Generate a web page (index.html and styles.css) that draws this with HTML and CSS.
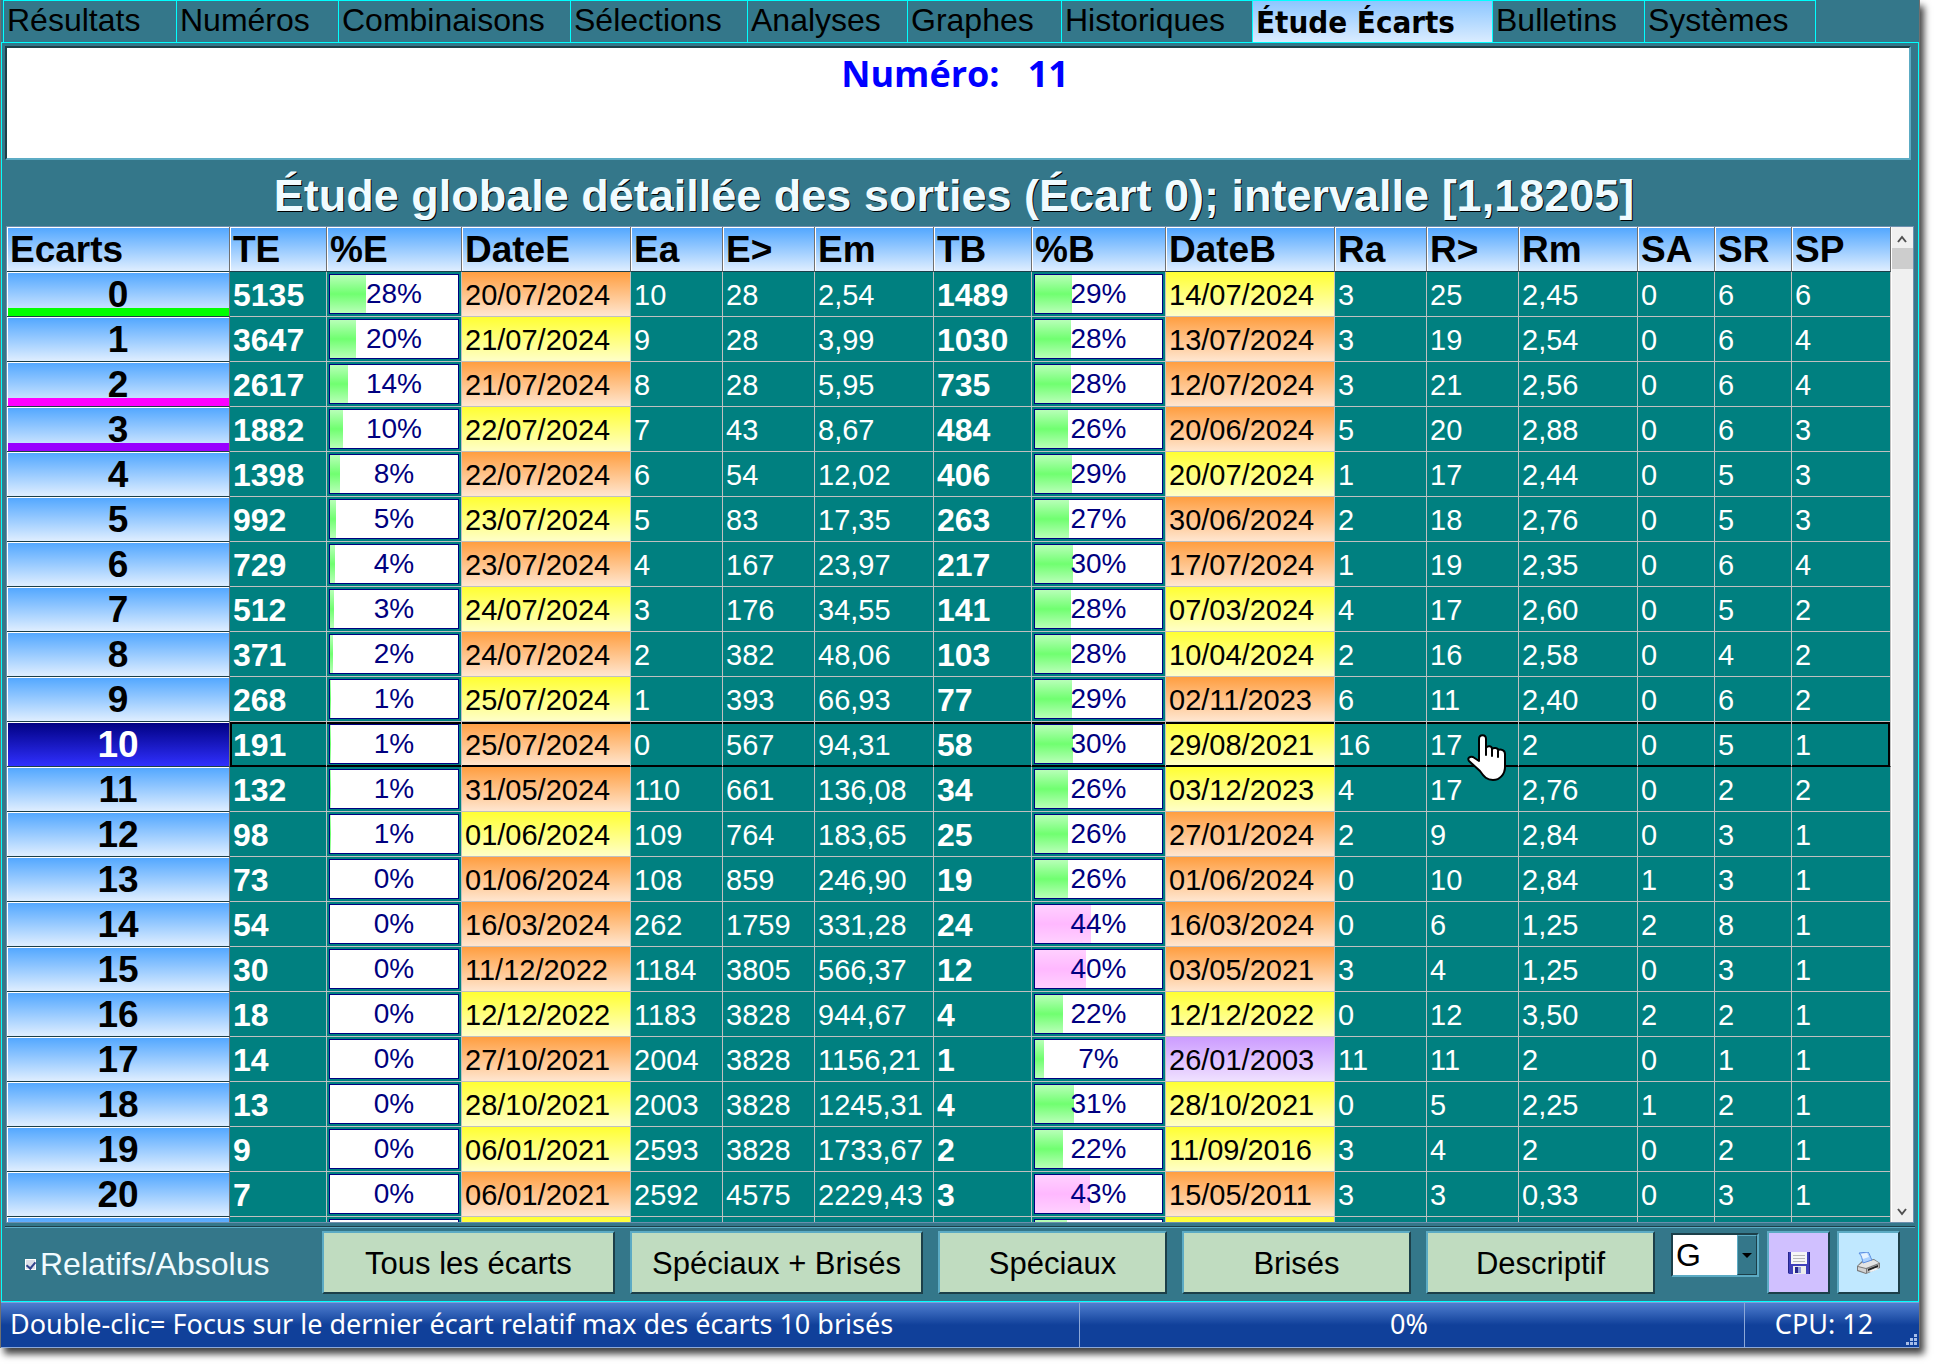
FILE: index.html
```html
<!DOCTYPE html>
<html lang="fr">
<head>
<meta charset="utf-8">
<title>Étude Écarts</title>
<link rel="stylesheet" href="styles.css">
</head>
<body>
<div class="app">
  <nav class="tabs" id="tabs"></nav>
  <main class="page">
    <section class="banner"><h1>Numéro:&nbsp;&nbsp; 11</h1></section>
    <h2 class="title">Étude globale détaillée des sorties (Écart 0); intervalle [1,18205]</h2>
    <div class="grid-box">
      <div class="grid-view">
        <table class="grid">
          <colgroup id="cols"></colgroup>
          <thead><tr id="head"></tr></thead>
          <tbody id="rows"></tbody>
        </table>
        <svg class="hand" viewBox="0 0 40 48" width="40" height="48" aria-hidden="true"><path d="M12 27V5c0-5 7-5 7 0v9c2-3 6-2 6 1 2-2 6-1 6 1 3-1 7 0 7 4v13c0 7-5 13-12 13-6 0-9-3-13-9L2 27c-2-3 1-5 4-4z" fill="#fff" stroke="#000" stroke-width="2" stroke-linejoin="round"/><path d="M19 13v8M25 15v7M31 17v6" stroke="#000" stroke-width="2" stroke-linecap="round"/></svg>
      </div>
      <div class="scroll" aria-hidden="true">
        <svg viewBox="0 0 21 26" width="21" height="26"><path d="M6 15l4-5 4 5" fill="none" stroke="#505050" stroke-width="2"/></svg>
        <div class="thumb"></div>
        <svg class="down" viewBox="0 0 21 26" width="21" height="26"><path d="M6 13l4 5 4-5" fill="none" stroke="#505050" stroke-width="2"/></svg>
      </div>
    </div>
    <footer class="tools">
      <label class="check"><input type="checkbox" checked>Relatifs/Absolus</label>
      <button class="btn wide">Tous les écarts</button>
      <button class="btn wide">Spéciaux + Brisés</button>
      <button class="btn">Spéciaux</button>
      <button class="btn">Brisés</button>
      <button class="btn">Descriptif</button>
      <div class="combo">
        <select aria-label="Type"><option>G</option></select>
        <span class="arrow"></span>
      </div>
      <button class="btn icon save" aria-label="Enregistrer">
        <svg viewBox="0 0 22 22" width="22" height="22"><path d="M0 0h22v22H1l-1-1z" fill="#3f3fba"/><path d="M0 0h1v21H0zM21 0h1v22h-1z" fill="#26268a"/><path d="M3 0h16v12H3z" fill="#f6f6f6"/><path d="M5 3h12v1H5zM5 6h12v1H5zM5 9h12v1H5z" fill="#b8b8b8"/><path d="M5 14h13v8H5z" fill="#ececec"/><path d="M7 15h6v6H7z" fill="#26268a"/><path d="M10 15h3v6h-3z" fill="#8e9ad8"/></svg>
      </button>
      <button class="btn icon print" aria-label="Imprimer">
        <svg viewBox="0 0 24 22" width="24" height="22"><path d="M0 14l5-5 12-2 6 4v5L9 22l-9-3z" fill="#7a7a7a"/><path d="M1 14l5-4 11-2 5 3-13 5z" fill="#e4e4e4"/><path d="M1 15l8 2v4l-8-3z" fill="#d2d2d2"/><path d="M10 17l12-5v4l-12 5z" fill="#b4b4b4"/><path d="M11 17l10-4v2l-10 4z" fill="#222"/><path d="M12 19l7-3 3 1-8 3z" fill="#f4f4f4"/><path d="M2 1l9-1c2 2 2 5 4 8l-9 3C5 7 5 4 2 1z" fill="#a9d0ff" stroke="#5e8fe0"/><path d="M4 2l6-1 2 4-6 2z" fill="#e6f3ff"/></svg>
      </button>
    </footer>
  </main>
  <div class="status">
    <span class="msg">Double-clic= Focus sur le dernier écart relatif max des écarts 10 brisés</span>
    <span class="progress">0%</span>
    <span class="cpu">CPU: 12</span>
    <svg class="grip" viewBox="0 0 12 12" width="12" height="12" aria-hidden="true"><path d="M8 0h3v3H8zM4 4h3v3H4zM8 4h3v3H8zM0 8h3v3H0zM4 8h3v3H4zM8 8h3v3H8z" fill="#a9bfe8"/></svg>
  </div>
</div>
<script src="grid.js"></script>
</body>
</html>
```
FILE: styles.css
```css
* { box-sizing: border-box; }
html { height: 100%; background: #fff; }
body { margin: 0; height: 100%; padding: 0 15px 16px 0; overflow: hidden; font-family: "Liberation Sans", Arial, sans-serif; }
.app { height: 100%; display: flex; flex-direction: column; background: #34778a; border-left: 1px solid #707070; border-right: 1px solid #707070; box-shadow: 4px 6px 7px 0 rgba(0,0,0,.75); }

.tabs { display: flex; height: 42px; padding-left: 2px; flex: none; border-top: 1px solid transparent; }
.tab { flex: none; height: 41px; padding: 0 0 0 3px; border-left: 1px solid #0ff; font-size: 32px; line-height: 38px; color: #000; text-decoration: none; white-space: nowrap; box-shadow: 0 -1px #0ff; }
.tab:last-child { border-right: 1px solid #0ff; }
.tab.active { font-family: "DejaVu Sans Condensed", Tahoma, sans-serif; font-weight: bold; font-size: 31px; line-height: 42px; background: linear-gradient(#8cc6ff, #dcedff); height: 42px; }

.page { flex: 1; min-height: 0; display: flex; flex-direction: column; border: 1px solid #0ff; }
.banner { height: 114px; flex: none; margin: 3px 7px 0 3px; background: #fff; border: 2px solid; border-color: #1c3f49 #5cabc4 #5cabc4 #1c3f49; text-align: center; }
.banner h1 { margin: 0; padding-right: 6px; font: bold 36px/52px "Open Sans", "Noto Sans", sans-serif; color: #00f; }
.title { height: 66px; flex: none; margin: 0 12px 0 0; font-size: 45px; line-height: 72px; text-align: center; color: #f0fbff; text-shadow: 1px 1px #000; white-space: nowrap; }

.grid-box { flex: 1; min-height: 0; display: flex; margin: 0 4px 0 4px; border: 1px solid #6c8fae; background: #008080; }
.grid-view { flex: 1; min-width: 0; overflow: hidden; position: relative; }
.grid { width: 100%; table-layout: fixed; border-collapse: separate; border-spacing: 0; }
.grid th, .grid td { height: 45px; padding: 2px 0 0 3px; text-align: left; white-space: nowrap; overflow: hidden; border-right: 1px solid #c0c0c0; border-bottom: 1px solid #c0c0c0; }
.grid td { font-size: 29px; line-height: 42px; color: #fff; }
.grid th { font-size: 37px; line-height: 42px; color: #000; background: linear-gradient(#50a6ff, #dfeeff); border-right-color: #707070; border-bottom-color: #1c3f49; box-shadow: inset 1px 1px #fff; }
.grid tbody th { text-align: center; padding: 2px 0 0; position: relative; }
.grid tbody tr.selected th { background: linear-gradient(#000080, #3030ff); color: #fff; }
.grid tr.selected td { border-bottom-color: #000; box-shadow: inset 0 2px #000, inset 0 -1px #000; }
.grid tr.selected td:nth-child(2) { box-shadow: inset 2px 2px #000, inset 0 -1px #000; }
.grid tr.selected td:last-child { box-shadow: inset -2px 2px #000, inset 0 -1px #000; }
.grid th.mark::after { content: ""; position: absolute; left: 1px; right: 0; bottom: 0; height: 8px; background: var(--mark); }
.grid th.green { --mark: #0f0; }
.grid th.pink { --mark: #f0f; }
.grid th.violet { --mark: #90f; }
.grid td.total { font-weight: bold; font-size: 32px; }
.grid td.date { color: #000; }
.grid td.o { background: linear-gradient(#ff9e40, #ffe6d0); }
.grid td.y { background: linear-gradient(#ffff32, #ffffc8); }
.grid td.v { background: linear-gradient(#cc9cff, #efe0ff); }
.grid td.pct { padding: 0 2px; }
.bar { height: 40px; border: 1px solid #000080; display: flex; align-items: center; justify-content: center; font-size: 28px; line-height: 38px; color: #000080; background: #fff; position: relative; }
.bar i { position: absolute; left: 0; top: 0; bottom: 0; background: linear-gradient(#b8ffb8, #70ff70 50%, #b8ffb8); }
.bar.hot i { background: linear-gradient(#ffd0ff, #ffb8ff 50%, #ffd0ff); }
.bar span { position: relative; }
.hand { position: absolute; left: 1460px; top: 507px; }

.scroll { width: 22px; flex: none; display: flex; flex-direction: column; background: #f0f0f0; border-left: 1px solid #fff; }
.thumb { height: 21px; flex: none; margin-top: -5px; background: #cdcdcd; }
.scroll svg { flex: none; }
.scroll .down { margin-top: auto; }

.tools { height: 75px; flex: none; display: flex; align-items: flex-start; gap: 15px; padding: 4px 15px 0 20px; margin: 3px 3px 0; border-top: 1px solid #1c3f49; box-shadow: inset 0 1px #5cabc4; }
.check { flex: 1; display: flex; align-items: center; gap: 4px; height: 66px; font-size: 32px; color: #f0fbff; white-space: nowrap; }
.check input { appearance: none; width: 11px; height: 11px; margin: 0; border: 1px solid #fff; background: #dcdfe8; flex: none; display: grid; place-items: center; }
.check input:checked::after { content: ""; width: 4px; height: 7px; border: solid #33448c; border-width: 0 2px 2px 0; transform: rotate(40deg); }
.btn { width: 229px; height: 63px; flex: none; padding: 1px 0 0; font: 31px/1 "Liberation Sans", Arial, sans-serif; color: #000; background: #c0dcc0; border: 2px solid; border-color: #5cabc4 #1c3f49 #1c3f49 #5cabc4; white-space: nowrap; }
.btn.wide { width: 293px; }
.btn.icon { width: 63px; display: grid; place-items: center; }
.save { background: #d0c0ff; margin-left: -7px; }
.print { background: #c0e8ff; margin-left: -8px; }
.combo { width: 88px; height: 44px; flex: none; margin: 2px 0 0 1px; display: grid; grid-template-columns: 1fr 20px; border: 2px solid; border-color: #1c3f49 #5cabc4 #5cabc4 #1c3f49; background: #34778a; }
.combo select { appearance: none; grid-area: 1 / 1; border: 0; border-radius: 0; padding: 0 0 0 3px; margin: 0; font: 32px/38px "Liberation Sans", Arial, sans-serif; background: #fff; color: #000; }
.arrow { grid-area: 1 / 2; border: 1px solid; border-color: #5cabc4 #1c3f49 #1c3f49 #5cabc4; display: grid; place-items: center; }
.arrow::after { content: ""; border: 5px solid transparent; border-top-color: #000; border-bottom: 0; }

.status { height: 46px; flex: none; display: flex; position: relative; background: linear-gradient(#4f7ecf, #10409a 50%); border-top: 1px solid #7f9fd8; border-bottom: 1px solid #8ca8d8; font: 27px/42px "Noto Sans", Tahoma, sans-serif; color: #fff; white-space: nowrap; }
.msg { flex: 1; padding-left: 9px; overflow: hidden; }
.progress { width: 665px; text-align: center; padding-right: 6px; border-left: 1px solid #8ca8d8; }
.cpu { width: 175px; text-align: center; padding-right: 16px; border-left: 1px solid #8ca8d8; }
.grip { position: absolute; right: 1px; bottom: 1px; }
```
FILE: grid.js
```js
const tabs = [["Résultats",173],["Numéros",162],["Combinaisons",232],["Sélections",177],["Analyses",160],["Graphes",154],["Historiques",191],["Étude Écarts",240],["Bulletins",152],["Systèmes",172]];
document.getElementById("tabs").innerHTML = tabs.map(([t, w]) =>
  `<a href="#" class="tab${t === "Étude Écarts" ? " active" : ""}" style="width:${w}px">${t}</a>`).join("");

const columns = [["Ecarts",223],["TE",97],["%E",135],["DateE",169],["Ea",92],["E>",92],["Em",119],["TB",98],["%B",134],["DateB",169],["Ra",92],["R>",92],["Rm",119],["SA",77],["SR",77],["SP",0]];
document.getElementById("cols").innerHTML = columns.map(([, w]) => w ? `<col style="width:${w}px">` : "<col>").join("");
document.getElementById("head").innerHTML = columns.map(([t]) => `<th scope="col">${t.replace(">", "&gt;")}</th>`).join("");

// The letter before each date is its background: o orange, y yellow, v violet.
const data = `0 5135 28 o20/07/2024 10 28 2,54 1489 29 y14/07/2024 3 25 2,45 0 6 6
1 3647 20 y21/07/2024 9 28 3,99 1030 28 o13/07/2024 3 19 2,54 0 6 4
2 2617 14 o21/07/2024 8 28 5,95 735 28 o12/07/2024 3 21 2,56 0 6 4
3 1882 10 y22/07/2024 7 43 8,67 484 26 o20/06/2024 5 20 2,88 0 6 3
4 1398 8 o22/07/2024 6 54 12,02 406 29 y20/07/2024 1 17 2,44 0 5 3
5 992 5 y23/07/2024 5 83 17,35 263 27 o30/06/2024 2 18 2,76 0 5 3
6 729 4 o23/07/2024 4 167 23,97 217 30 o17/07/2024 1 19 2,35 0 6 4
7 512 3 y24/07/2024 3 176 34,55 141 28 y07/03/2024 4 17 2,60 0 5 2
8 371 2 o24/07/2024 2 382 48,06 103 28 y10/04/2024 2 16 2,58 0 4 2
9 268 1 y25/07/2024 1 393 66,93 77 29 o02/11/2023 6 11 2,40 0 6 2
10 191 1 o25/07/2024 0 567 94,31 58 30 y29/08/2021 16 17 2 0 5 1
11 132 1 o31/05/2024 110 661 136,08 34 26 y03/12/2023 4 17 2,76 0 2 2
12 98 1 y01/06/2024 109 764 183,65 25 26 o27/01/2024 2 9 2,84 0 3 1
13 73 0 o01/06/2024 108 859 246,90 19 26 o01/06/2024 0 10 2,84 1 3 1
14 54 0 o16/03/2024 262 1759 331,28 24 44 o16/03/2024 0 6 1,25 2 8 1
15 30 0 o11/12/2022 1184 3805 566,37 12 40 o03/05/2021 3 4 1,25 0 3 1
16 18 0 y12/12/2022 1183 3828 944,67 4 22 y12/12/2022 0 12 3,50 2 2 1
17 14 0 o27/10/2021 2004 3828 1156,21 1 7 v26/01/2003 11 11 2 0 1 1
18 13 0 y28/10/2021 2003 3828 1245,31 4 31 y28/10/2021 0 5 2,25 1 2 1
19 9 0 y06/01/2021 2593 3828 1733,67 2 22 y11/09/2016 3 4 2 0 2 1
20 7 0 o06/01/2021 2592 4575 2229,43 3 43 o15/05/2011 3 3 0,33 0 3 1`;
const marks = {0: "mark green", 2: "mark pink", 3: "mark violet"};
const bar = (v) => `<td class="pct"><div class="bar${v >= 40 ? " hot" : ""}">${v > 0 ? `<i style="width:${v}%"></i>` : ""}<span>${v}%</span></div></td>`;
const rows = data.split("\n").map((line) => {
  const r = line.split(" ");
  const cells = r.slice(1).map((v, i) => {
    if (i === 1 || i === 7) return bar(+v);
    if (i === 2 || i === 8) return `<td class="date ${v[0]}">${v.slice(1)}</td>`;
    return `<td${i === 0 || i === 6 ? ' class="total"' : ""}>${v}</td>`;
  });
  return `<tr${r[0] === "10" ? ' class="selected"' : ""}><th scope="row" class="${marks[r[0]] || ""}">${r[0]}</th>${cells.join("")}</tr>`;
});
// The next row starts under the edge of the view; only its top shows.
const partial = `<tr><th></th><td></td><td class="pct"><div class="bar"></div></td><td class="y"></td>${"<td></td>".repeat(4)}<td class="pct"><div class="bar"><i style="width:25%"></i></div></td><td class="y"></td>${"<td></td>".repeat(6)}</tr>`;
document.getElementById("rows").innerHTML = rows.join("") + partial;
```
